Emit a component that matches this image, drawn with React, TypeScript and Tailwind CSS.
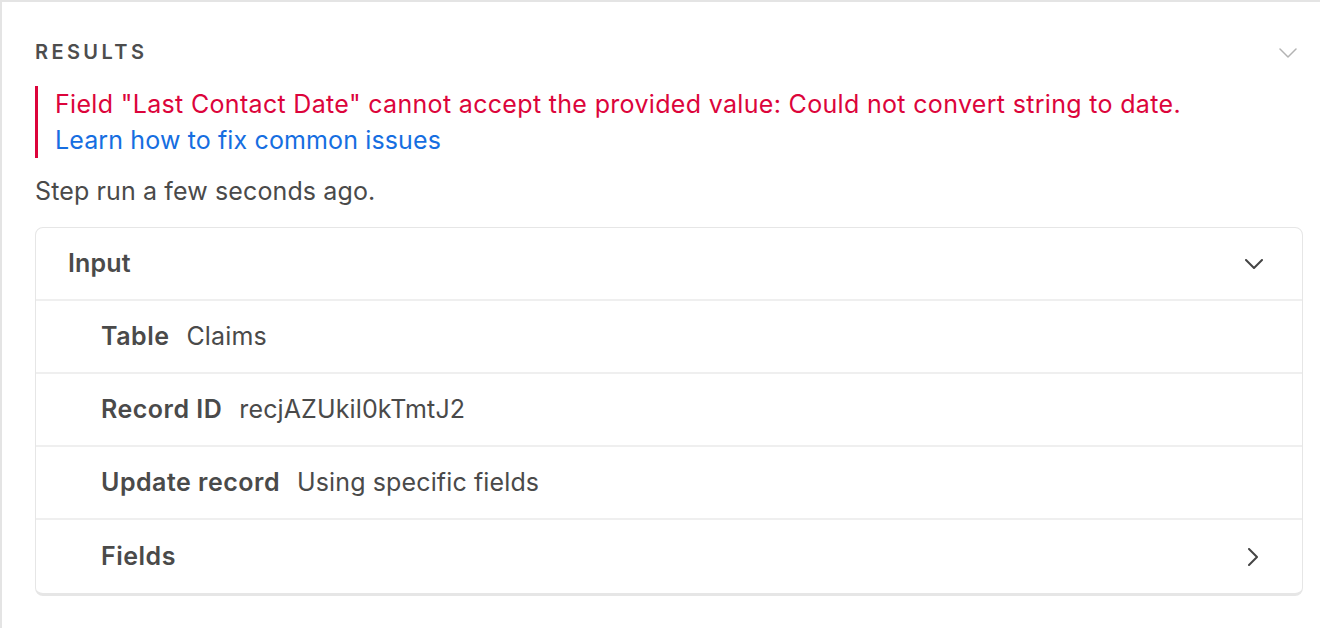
const rows = [
  { label: "Table", value: "Claims" },
  { label: "Record ID", value: "recjAZUkil0kTmtJ2" },
  { label: "Update record", value: "Using specific fields" },
];

function ChevronDownThin({ className, width = 18, stroke = 1.5 }: { className?: string; width?: number; stroke?: number }) {
  return (
    <svg className={className} width={width} height={10} viewBox="0 0 18 10" fill="none" stroke="currentColor" strokeWidth={stroke} strokeLinecap="round" strokeLinejoin="round">
      <polyline points="1,1 9,9 17,1" />
    </svg>
  );
}

function ChevronRightThin({ className }: { className?: string }) {
  return (
    <svg className={className} width={10} height={18} viewBox="0 0 10 18" fill="none" stroke="currentColor" strokeWidth={2} strokeLinecap="round" strokeLinejoin="round">
      <polyline points="1,1 9,9 1,17" />
    </svg>
  );
}

export default function App() {
  return (
    <div
      className="h-[628px] w-full overflow-hidden border-t-2 border-l-2 border-[#e4e4e4] bg-white pl-[33px] pr-[17px] pt-[38px] text-[#4a4a4a]"
      style={{ fontFamily: "Inter, 'Liberation Sans', sans-serif" }}
    >
      {/* Header */}
      <div className="flex items-center justify-between">
        <h2 className="text-[20px] font-semibold uppercase leading-[24px] tracking-[0.17em] text-[#4d4d4d]">
          Results
        </h2>
        <ChevronDownThin className="mr-[6px] mt-[2px] text-[#b3b3b3]" />
      </div>

      {/* Error */}
      <div className="mt-[22px] border-l-[3px] border-[#dc043b] pl-[17px] text-[25px] leading-[36px] tracking-[0.005em]">
        <p className="tracking-[0.013em] text-[#dc043b]">
          Field "Last Contact Date" cannot accept the provided value: Could not convert string to date.
        </p>
        <a href="#" className="text-[#166ee1]">
          Learn how to fix common issues
        </a>
      </div>

      <p className="mt-[15px] text-[25px] leading-[36px] tracking-[0.005em]">Step run a few seconds ago.</p>

      {/* Input card */}
      <div className="mt-[18px] overflow-hidden rounded-lg border border-b-[3px] border-[#e6e6e6] text-[25px] tracking-[0.005em]">
        <div className="flex h-[71px] items-center justify-between pl-[32px] pr-[39px]">
          <span className="font-semibold">Input</span>
          <ChevronDownThin className="text-[#444]" stroke={2} />
        </div>
        {rows.map((r) => (
          <div
            key={r.label}
            className="flex h-[73px] items-center gap-[17px] border-t-2 border-[#efefef] pl-[65px]"
          >
            <span className="font-semibold tracking-[0.02em]">{r.label}</span>
            <span>{r.value}</span>
          </div>
        ))}
        <div className="flex h-[75px] items-center justify-between border-t-2 border-[#efefef] pl-[65px] pr-[44px]">
          <span className="font-semibold tracking-[0.02em]">Fields</span>
          <ChevronRightThin className="text-[#444]" />
        </div>
      </div>
    </div>
  );
}
